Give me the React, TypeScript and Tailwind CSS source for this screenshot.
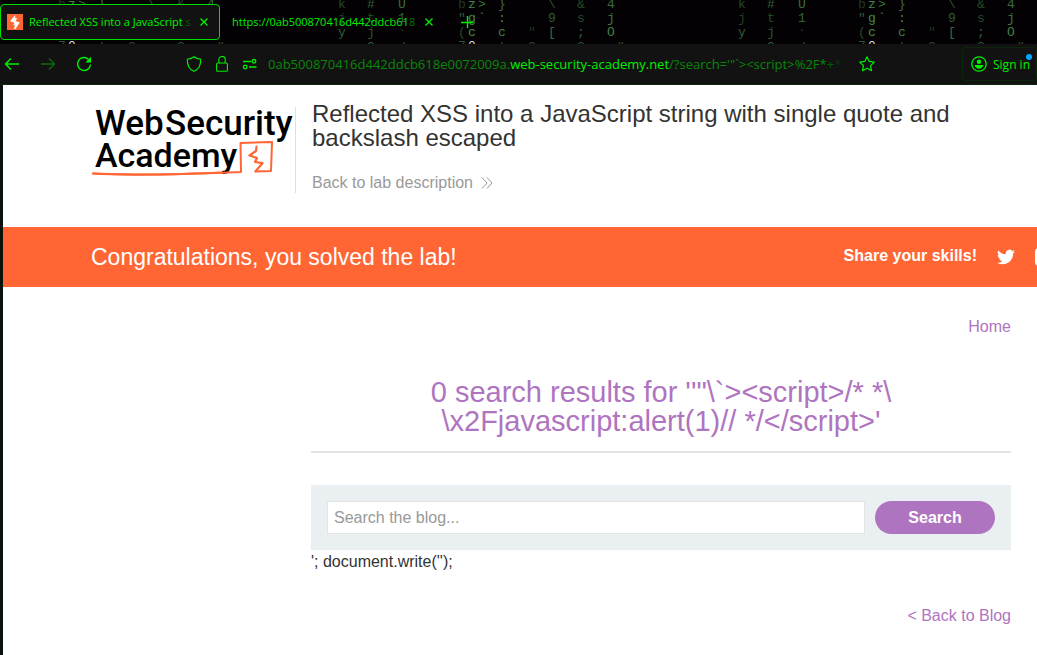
import React from "react";

type Glyph = [x: number, y: number, char: string, opacity: number];

const TILE = 400;
const TAB_END = 220;

const GLYPHS: Glyph[] = [
  [338, 8, "k", 0.4], [338, 22, "j", 0.35], [338, 36, "y", 0.5],
  [367, 8, "#", 0.5], [367, 22, "t", 0.4], [367, 36, "j", 0.45], [367, 51, "2", 0.5],
  [398, 8, "U", 0.6], [398, 22, "1", 0.55], [398, 39, "`", 0.5], [398, 51, "/", 0.5],
  [458, 8, "b", 0.3], [458, 22, "\"", 0.5], [458, 36, "(", 0.4], [458, 50, "7", 0.5],
  [468, 8, "z", 0.75], [468, 22, "g", 0.75], [468, 36, "c", 0.75],
  [478, 8, ">", 0.6], [478, 22, "`", 0.8],
  [498, 8, "}", 0.6], [498, 22, ":", 0.7], [498, 36, "c", 0.7], [498, 51, "|", 0.5],
  [528, 36, "\"", 0.3], [528, 51, "G", 0.4],
  [548, 8, "\\", 0.45], [548, 22, "9", 0.5], [548, 36, "[", 0.6],
  [577, 8, "&", 0.4], [577, 22, "s", 0.4], [577, 36, ";", 0.5], [577, 51, "3", 0.5],
  [607, 8, "4", 0.6], [607, 22, "j", 0.65], [607, 36, "O", 0.7], [617, 51, "\"", 0.4],
];

function CodeRain() {
  return (
    <svg className="absolute inset-0 h-full w-full" aria-hidden="true">
      {[-TILE, 0, TILE].map((shift) => (
        <g key={shift} fontFamily="Liberation Mono, monospace" fontSize="13" fill="#5cb45c">
          {GLYPHS.filter(([x, y]) => x + shift >= 0 && (x + shift > TAB_END || y < 20 || y > 40)).map(([x, y, char, opacity]) => (
            <text key={`${x}-${y}`} x={x + shift} y={y} opacity={opacity}>
              {char}
            </text>
          ))}
          <text x={468 + shift} y="50" fill="#d8d8d8">
            0
          </text>
        </g>
      ))}
    </svg>
  );
}

function BoltIcon() {
  return (
    <svg viewBox="0 0 16 16" className="h-4 w-4 shrink-0" aria-hidden="true">
      <rect width="16" height="16" fill="#ff6633" />
      <path d="M8.200 1 3 7.200l4.600 1.500-1.400 2.300 1.800.5-1.200 3.500h1.600l4.400-6.600-4.300-1.500 1.700-2.300-2-.6z" fill="#fff" />
    </svg>
  );
}

function CloseIcon() {
  return (
    <svg viewBox="0 0 8 8" className="h-2 w-2" fill="none" stroke="currentColor" strokeWidth="1.4">
      <path d="M.5.5l7 7M7.5.5l-7 7" />
    </svg>
  );
}

function TabStrip() {
  return (
    <div className="relative h-11 overflow-hidden bg-[#030104]">
      <CodeRain />
      <div className="relative flex h-full items-start pt-1 text-[11px]" role="tablist">
        <div className="flex h-9 w-[220px] items-center rounded border border-[#00e000] bg-[#121212] pl-1.5">
          <BoltIcon />
          <button role="tab" aria-selected="true" className="ml-1.5 w-[168px] whitespace-nowrap text-left">
            Reflected XSS into a JavaScript <span className="text-[#0a5a0a]">s</span>
          </button>
          <button aria-label="Close tab" className="ml-[3px]">
            <CloseIcon />
          </button>
        </div>
        <div className="flex h-9 items-center pl-3">
          <button role="tab" aria-selected="false" className="w-[189px] whitespace-nowrap text-left">
            https://0ab500870416d442ddcb61<span className="text-[#0a6e0a]">8</span>
          </button>
          <button aria-label="Close tab" className="ml-1">
            <CloseIcon />
          </button>
          <button aria-label="New tab" className="ml-7">
            <svg viewBox="0 0 12 12" className="h-3 w-3" stroke="currentColor" strokeWidth="1.4">
              <path d="M6.500 0v12M0 6.500h12" />
            </svg>
          </button>
        </div>
      </div>
    </div>
  );
}

function AddressBar() {
  return (
    <div className="flex h-[41px] items-center border-b border-[#0c260c] bg-[#121212]">
      <button aria-label="Back" className="ml-1">
        <svg viewBox="0 0 16 16" className="h-4 w-4" fill="none" stroke="currentColor" strokeWidth="1.5">
          <path d="M7 2.5 1.5 8 7 13.500M1.500 8H15" />
        </svg>
      </button>
      <button aria-label="Forward" className="ml-5 text-[#0a6e0a]">
        <svg viewBox="0 0 16 16" className="h-4 w-4" fill="none" stroke="currentColor" strokeWidth="1.3">
          <path d="M9 2.5 14.500 8 9 13.500M14.500 8H1" />
        </svg>
      </button>
      <button aria-label="Reload" className="ml-5">
        <svg viewBox="0 0 16 16" className="h-4 w-4" fill="none" stroke="currentColor" strokeWidth="1.4">
          <path d="M14.500 8.500A6.500 6.500 0 1 1 12.600 3.400" />
          <path d="M15 .8v5.700H9.300z" fill="currentColor" stroke="none" />
        </svg>
      </button>
      <div className="ml-[94px] flex items-center">
        <svg viewBox="0 0 16 16" className="h-4 w-4" fill="none" stroke="currentColor" strokeWidth="1.1">
          <path d="M8 .8C6 2.400 3.500 3 1.300 3.300 1.200 8.500 2.700 13.500 8 15.300c5.300-1.800 6.800-6.800 6.700-12C12.500 3 10 2.400 8 .8z" />
        </svg>
        <svg viewBox="0 0 12 16" className="ml-3.5 h-4 w-3" fill="none" stroke="currentColor" strokeWidth="1.1">
          <rect x=".6" y="7" width="10.800" height="8.300" rx="1.300" />
          <path d="M2.800 7V3.700a3.200 3.200 0 0 1 6.400 0V7" />
        </svg>
        <svg viewBox="0 0 16 12" className="ml-3.5 h-3 w-4" fill="none" stroke="currentColor" strokeWidth="1.3">
          <path d="M1 3.500h8M7 9h7.500" />
          <circle cx="12" cy="3.300" r="1.800" />
          <circle cx="3.200" cy="9" r="1.800" />
        </svg>
      </div>
      <div className="ml-2.5 w-[583px] pt-0.5 whitespace-nowrap text-[13px] text-[#0a860a]">
        0ab500870416d442ddcb618e0072009a.
        <span className="text-[#00f000]">web-security-academy.net</span>
        /?search='"`&gt;&lt;script&gt;%2F*<span className="text-[#0a5a0a]">+</span>
        <span className="text-[#103010]">*</span>
      </div>
      <button aria-label="Bookmark this page" className="ml-2">
        <svg viewBox="0 0 16 16" className="h-4 w-4" fill="none" stroke="currentColor" strokeWidth="1.2" strokeLinejoin="round">
          <path d="m8 .8 2.200 4.600 5.100.7-3.700 3.500.9 5.100L8 12.300l-4.500 2.400.9-5.100L.7 6.100l5.100-.7z" />
        </svg>
      </button>
      <button className="relative ml-auto flex h-[34px] w-[75px] items-center rounded border border-[#0c260c] pl-2 text-[12px]">
        <svg viewBox="0 0 16 16" className="h-4 w-4 shrink-0" fill="none" stroke="currentColor" strokeWidth="1.300">
          <circle cx="8" cy="8" r="7.200" />
          <circle cx="8" cy="5.800" r="2.200" fill="currentColor" stroke="none" />
          <path d="M3.800 9h8.400c0 2-1.800 3.700-4.200 3.700S3.800 11 3.800 9z" fill="currentColor" stroke="none" />
        </svg>
        <span className="ml-1.5 pt-0.5 whitespace-nowrap">Sign in</span>
        <span className="absolute right-1 top-1.5 h-1.5 w-1.5 rounded-full bg-[#00a8ff]" />
      </button>
    </div>
  );
}

function AcademyLogo() {
  return (
    <a href="#academy" aria-label="Web Security Academy" className="block w-[203px] shrink-0">
      <svg viewBox="0 0 203 86" className="h-[86px] w-[203px]">
        <g fontFamily="Roboto, sans-serif" fontSize="35" fontWeight="500" fill="#000">
          <text x="4" y="28">Web</text>
          <text x="74" y="28">Security</text>
          <text x="4" y="60" fontSize="34">Academy</text>
        </g>
        <g fill="none" stroke="#ff6633" strokeLinejoin="round" strokeLinecap="round">
          <path d="M2 66.500C40 69 90 67 150 65L149.500 36 181 35 180 64 164.500 64.500" strokeWidth="2" />
          <path d="M2 66.500Q60 69 130 65.500" strokeWidth="2" />
          <path d="M165.500 39.500 165 44l-6.500 4.500L166 51l-2 4 7.500 1.200-7 8" strokeWidth="2.200" />
        </g>
      </svg>
    </a>
  );
}

function LabHeader() {
  return (
    <header className="flex h-[142px] items-start pl-[88px]">
      <div className="mt-[22px] border-r border-[#e0e0e0] pr-px">
        <AcademyLogo />
      </div>
      <div className="flex-1 pl-4 pr-16 pt-[17px]">
        <h2 className="text-[24px] leading-6 text-[#333332]">
          Reflected XSS into a JavaScript string with single quote and backslash escaped
        </h2>
        <a href="#description" className="mt-[21px] flex items-center text-[16px] leading-6 text-[#999]">
          Back to lab description
          <svg viewBox="0 0 12 12" className="ml-2 h-3 w-3" fill="none" stroke="currentColor" strokeWidth="1">
            <path d="m1 .5 5 5.500-5 5.500M6 .5l5 5.500-5 5.500" />
          </svg>
        </a>
      </div>
    </header>
  );
}

function SolvedBanner() {
  return (
    <section className="flex h-[60px] items-center overflow-hidden bg-[#ff6633] pl-[88px] text-white">
      <h4 className="text-[23px]">Congratulations, you solved the lab!</h4>
      <span className="ml-auto pb-0.5 text-[16px] font-bold leading-5">Share your skills!</span>
      <a href="#twitter" aria-label="Share on Twitter" className="ml-5">
        <svg viewBox="0 0 24 24" className="h-[18px] w-[18px]" fill="currentColor">
          <path d="M24 4.600a10 10 0 0 1-2.800.8 4.900 4.900 0 0 0 2.100-2.700 9.800 9.800 0 0 1-3.100 1.200 4.900 4.900 0 0 0-8.400 4.500A14 14 0 0 1 1.700 3.200a4.900 4.900 0 0 0 1.500 6.500 4.900 4.900 0 0 1-2.200-.6v.1a4.900 4.900 0 0 0 3.900 4.800 5 5 0 0 1-2.200.1 4.900 4.900 0 0 0 4.600 3.400A9.900 9.900 0 0 1 0 19.500a13.900 13.900 0 0 0 7.500 2.200c9.100 0 14-7.500 14-14v-.6A10 10 0 0 0 24 4.600z" />
        </svg>
      </a>
      <a href="#linkedin" aria-label="Share on LinkedIn" className="ml-5 w-0.5 shrink-0">
        <span className="block h-[18px] w-[18px] rounded-sm bg-white" />
      </a>
    </section>
  );
}

function BlogSearch() {
  return (
    <main className="ml-[308px] mr-[26px] text-[16px] leading-5 text-[#333332]">
      <nav className="flex justify-end pt-[30px] text-[#af74c0]">
        <a href="#home">Home</a>
      </nav>
      <h1 className="mt-[41px] border-b-2 border-[#e4e4e4] pb-[15px] text-center text-[29px] leading-[29px] text-[#af74c0]">
        0 search results for ''"\`&gt;&lt;script&gt;/* *\<br />
        \x2Fjavascript:alert(1)// */&lt;/script&gt;'
      </h1>
      <form className="mt-8 flex gap-2.5 bg-[#eaeff2] p-4" onSubmit={(event) => event.preventDefault()}>
        <input
          type="text"
          aria-label="Search the blog"
          placeholder="Search the blog..."
          className="h-[33px] min-w-0 flex-1 border border-[#e4e4e4] bg-white px-1.5 placeholder:text-[#999]"
        />
        <button type="submit" className="h-[33px] w-[120px] rounded-full bg-[#af74c0] font-bold text-white">
          Search
        </button>
      </form>
      <p className="mt-0.5">'; document.write('');</p>
      <div className="mt-[34px] flex justify-end text-[#af74c0]">
        <a href="#blog">&lt; Back to Blog</a>
      </div>
    </main>
  );
}

export default function App() {
  return (
    <div className="flex min-h-screen flex-col overflow-hidden bg-[#0b120b]">
      <div className="font-['Open_Sans',sans-serif] text-[#00f000]">
        <TabStrip />
        <AddressBar />
      </div>
      <div className="ml-[3px] flex-1 bg-white font-['Liberation_Sans',Arial,sans-serif]">
        <LabHeader />
        <SolvedBanner />
        <BlogSearch />
      </div>
    </div>
  );
}
